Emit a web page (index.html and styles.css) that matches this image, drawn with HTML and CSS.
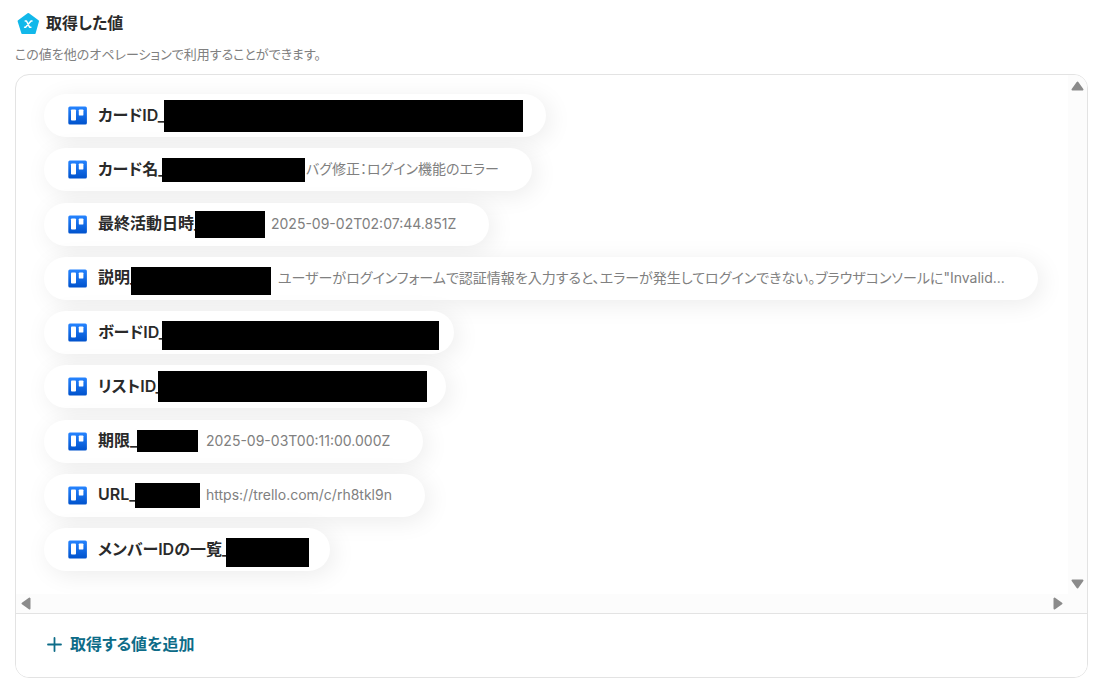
FILE: index.html
```html
<!DOCTYPE html>
<html lang="ja">
<head>
<meta charset="utf-8">
<meta name="viewport" content="width=device-width, initial-scale=1">
<title>取得した値</title>
<link rel="stylesheet" href="styles.css">
</head>
<body>
<svg class="defs" width="0" height="0" aria-hidden="true">
  <defs>
    <linearGradient id="blue" x1="0" y1="0" x2="0" y2="1"><stop offset="0" stop-color="#2684ff"/><stop offset="1" stop-color="#0052cc"/></linearGradient>
    <symbol id="board" viewBox="0 0 19 19">
      <rect x="0.3" y="0.5" width="18.6" height="18" rx="1.6" fill="url(#blue)"/>
      <rect x="3" y="3.4" width="5" height="11" rx="0.9" fill="#fff"/>
      <rect x="10.8" y="3.4" width="4.6" height="6.2" rx="0.9" fill="#fff"/>
    </symbol>
  </defs>
</svg>
<main class="page">
  <header class="head">
    <svg class="head-icon" viewBox="0 0 24 24" aria-hidden="true">
      <path d="M12.3 3.2 21.8 10.2 18.5 21.8H6.5L2.8 10.2Z" fill="#12b8ea" stroke="#12b8ea" stroke-width="2.4" stroke-linejoin="round"/>
      <path d="M9.2 10h1.3l3 6.200h1.400M16 10h-1L9.600 16.200h-1" fill="none" stroke="#fff" stroke-width="1.5" stroke-linecap="round" stroke-linejoin="round"/>
    </svg>
    <h1 class="title">取得した値</h1>
  </header>
  <p class="note">この値を他のオペレーションで利用することができます。</p>
  <section class="card">
    <div class="viewport">
      <ul class="list">
        <li class="pill"><svg class="icon"><use href="#board"/></svg><span class="field" style="--name:66px;--slot:367px;--bar:359px;--tall:32px"><span class="name">カードID_</span><span class="slot"><span class="mask"></span></span></span></li>
        <li class="pill"><svg class="icon"><use href="#board"/></svg><span class="field" style="--name:64px;--slot:144px;--bar:143px;--tall:24px"><span class="name">カード名_</span><span class="slot"><span class="mask"></span></span></span><span class="value">バグ修正：ログイン機能のエラー</span></li>
        <li class="pill"><svg class="icon"><use href="#board"/></svg><span class="field" style="--name:97px;--slot:76px;--bar:70px;--tall:27px"><span class="name">最終活動日時_</span><span class="slot"><span class="mask"></span></span></span><span class="value">2025-09-02T02:07:44.851Z</span></li>
        <li class="pill"><svg class="icon"><use href="#board"/></svg><span class="field" style="--name:33px;--slot:147px;--bar:140px;--tall:28px"><span class="name">説明_</span><span class="slot low"><span class="mask"></span></span></span><span class="value">ユーザーがログインフォームで認証情報を入力すると、エラーが発生してログインできない。ブラウザコンソールに"Invalid...</span></li>
        <li class="pill"><svg class="icon"><use href="#board"/></svg><span class="field" style="--name:64px;--slot:277px;--bar:277px;--tall:29px"><span class="name">ボードID_</span><span class="slot low"><span class="mask"></span></span></span></li>
        <li class="pill"><svg class="icon"><use href="#board"/></svg><span class="field" style="--name:60px;--slot:273px;--bar:269px;--tall:31px"><span class="name">リストID_</span><span class="slot"><span class="mask"></span></span></span></li>
        <li class="pill"><svg class="icon"><use href="#board"/></svg><span class="field" style="--name:39px;--slot:69px;--bar:61px;--tall:22px"><span class="name">期限_</span><span class="slot"><span class="mask"></span></span></span><span class="value">2025-09-03T00:11:00.000Z</span></li>
        <li class="pill"><svg class="icon"><use href="#board"/></svg><span class="field" style="--name:37px;--slot:71px;--bar:65px;--tall:25px"><span class="name">URL_</span><span class="slot"><span class="mask"></span></span></span><span class="value">https://trello.com/c/rh8tkl9n</span></li>
        <li class="pill"><svg class="icon"><use href="#board"/></svg><span class="field" style="--name:128px;--slot:89px;--bar:83px;--tall:29px"><span class="name">メンバーIDの一覧_</span><span class="slot low"><span class="mask"></span></span></span></li>
      </ul>
      <div class="track track-y">
        <button class="arrow" type="button" aria-label="上へスクロール"><svg width="13" height="10" viewBox="0 0 13 10"><path d="M6.5 1.5 11.5 8.5H1.5Z"/></svg></button>
        <button class="arrow" type="button" aria-label="下へスクロール"><svg width="13" height="10" viewBox="0 0 13 10"><path d="M6.5 8.5 11.5 1.5H1.5Z"/></svg></button>
      </div>
      <div class="track track-x">
        <button class="arrow" type="button" aria-label="左へスクロール"><svg width="10" height="13" viewBox="0 0 10 13"><path d="M1.5 6.5 8.5 1.5V11.5Z"/></svg></button>
        <button class="arrow" type="button" aria-label="右へスクロール"><svg width="10" height="13" viewBox="0 0 10 13"><path d="M8.5 6.5 1.5 1.5V11.5Z"/></svg></button>
      </div>
    </div>
    <footer class="foot">
      <button class="add" type="button"><svg width="15" height="15" viewBox="0 0 15 15" aria-hidden="true"><path d="M7.5 1v13M1 7.5h13" stroke="currentColor" stroke-width="1.8" stroke-linecap="round"/></svg>取得する値を追加</button>
    </footer>
  </section>
</main>
</body>
</html>
```
FILE: styles.css
```css
* { box-sizing: border-box; }
body {
  margin: 0;
  background: #fff;
  color: #2a2a2a;
  font-family: Inter, "Noto Sans CJK JP", sans-serif;
  font-feature-settings: "palt";
}
.defs { position: absolute; }
.page {
  display: flex;
  flex-direction: column;
  min-height: 100vh;
  padding: 11px 14px 19px 15px;
}
.head { display: flex; align-items: center; gap: 6px; height: 24px; }
.head-icon { width: 24px; height: 24px; margin-left: 1px; }
.title { margin: 0; font-size: 16px; line-height: 24px; font-weight: 600; }
.note { margin: 10px 0; font-size: 13px; line-height: 19px; color: #808080; }
.card {
  flex: 1;
  display: flex;
  flex-direction: column;
  border: 1px solid #e3e3e3;
  border-radius: 14px;
  overflow: hidden;
}
.viewport {
  flex: 1;
  display: grid;
  grid-template: 1fr 19px / 1fr 19px;
}
.list {
  display: flex;
  flex-direction: column;
  align-items: flex-start;
  justify-content: space-between;
  gap: 8px;
  min-width: 0;
  margin: 0;
  padding: 19px 28px 23px;
  list-style: none;
  overflow: hidden;
}
.pill {
  display: flex;
  align-items: center;
  height: 43px;
  padding: 0 15px 0 24px;
  border-radius: 22px;
  background: #fff;
  box-shadow: 4px 4px 24px rgba(0, 0, 0, 0.08);
  white-space: nowrap;
}
.icon { flex: none; width: 19px; height: 19px; margin-right: 11px; }
.field {
  display: grid;
  grid-template-columns: var(--name) var(--slot);
  align-items: center;
}
.name { padding-bottom: 2px; font-size: 16px; line-height: 24px; font-weight: 600; }
.slot { display: flex; }
.low { padding-top: 6px; }
.mask { position: relative; width: var(--bar); height: var(--tall); background: #000; }
.value { margin-right: 18px; padding-bottom: 1px; font-size: 14px; line-height: 20px; color: #808080; }
.track { display: flex; justify-content: space-between; background: #fcfcfc; }
.track-y { flex-direction: column; align-items: center; padding: 6px 0 5px; }
.track-x { grid-column: 1 / -1; align-items: center; padding: 0 24px 0 5px; }
.arrow { display: flex; padding: 0; border: 0; background: none; }
.arrow path { fill: #8b8b8b; stroke: #8b8b8b; stroke-width: 2; stroke-linejoin: round; }
.foot { padding: 15px 24px 18px; border-top: 1px solid #e3e3e3; background: #fff; }
.add {
  display: flex;
  align-items: center;
  gap: 8px;
  padding: 3px 7px;
  border: 0;
  background: none;
  color: #0d6c88;
  font: inherit;
  font-size: 16px;
  line-height: 24px;
  font-weight: 600;
}
```
